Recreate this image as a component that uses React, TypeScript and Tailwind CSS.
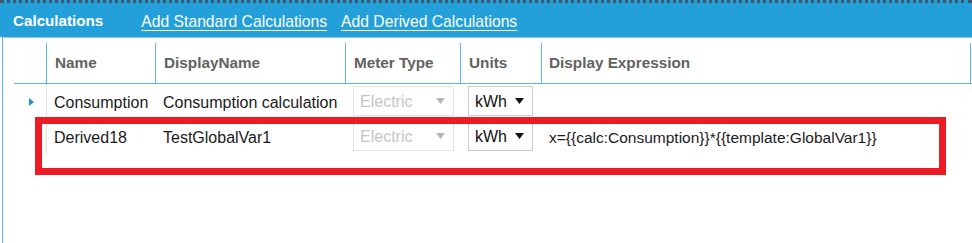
const font = { fontFamily: "'Segoe UI', 'Liberation Sans', Arial, sans-serif" };

function Caret({ muted }: { muted?: boolean }) {
  return (
    <svg width="9" height="6" viewBox="0 0 9 6" className="shrink-0">
      <path d="M0 0 H9 L4.5 6 Z" fill={muted ? "#b5b5b5" : "#111111"} />
    </svg>
  );
}

function Combo({ value, disabled, width }: { value: string; disabled?: boolean; width: string }) {
  return (
    <div
      className={`flex items-center justify-between h-[30px] pl-[6px] pr-[8px] border bg-white ${width} ${
        disabled ? "border-[#e3e3e3] text-[#c6c6c6]" : "border-[#cdcdcd] text-[#111]"
      }`}
    >
      <span className="text-[16px] leading-none pt-[2px]">{value}</span>
      <Caret muted={disabled} />
    </div>
  );
}

const cols = "grid grid-cols-[32px_109px_190px_115px_81px_430px]";

const rows = [
  { name: "Consumption", display: "Consumption calculation", expr: "", current: true },
  { name: "Derived18", display: "TestGlobalVar1", expr: "x={{calc:Consumption}}*{{template:GlobalVar1}}", current: false },
];

export default function App() {
  return (
    <div className="relative w-[972px] h-[243px] bg-white overflow-hidden flex flex-col" style={font}>
      {/* title bar */}
      <div className="h-[37px] shrink-0 bg-[#239fda] border-t-[3px] border-dotted border-[#3d5566] flex items-center pl-[13px] pt-[3px] gap-[38px] text-white">
        <span className="font-bold text-[15.2px]">Calculations</span>
        <div className="flex gap-[14px] text-[15.7px]">
          <span className="underline underline-offset-[3px]">Add Standard Calculations</span>
          <span className="underline underline-offset-[3px]">Add Derived Calculations</span>
        </div>
      </div>

      {/* body */}
      <div className="flex-1 ml-[2px] border-l border-[#5fb6e6] border-t border-t-[#8fcdef] pl-[11px] pt-[5px]">
        <div className={`${cols} h-[41px] border-b border-[#5fb6e6] text-[15.3px] font-bold text-[#626262]`}>
          <div />
          <div className="border-l border-[#5fb6e6] flex items-center pl-[8px]">Name</div>
          <div className="border-l border-[#5fb6e6] flex items-center pl-[8px]">DisplayName</div>
          <div className="border-l border-[#5fb6e6] flex items-center pl-[8px]">Meter Type</div>
          <div className="border-l border-[#5fb6e6] flex items-center pl-[8px]">Units</div>
          <div className="border-l border-r border-[#5fb6e6] flex items-center pl-[7px]">Display Expression</div>
        </div>

        {rows.map((r) => (
          <div key={r.name} className={`${cols} h-[35px] text-[16px] text-[#1b1b1b]`}>
            <div className="flex items-center justify-center pl-[2px] pt-[1px]">
              {r.current && (
                <svg width="5" height="8" viewBox="0 0 5 8">
                  <path d="M0 0 L5 4 L0 8 Z" fill="#1f8fd2" />
                </svg>
              )}
            </div>
            <div className="border-l border-[#e2e2e2] flex items-center pl-[7px] pt-[2px] whitespace-nowrap">{r.name}</div>
            <div className="flex items-center pl-[8px] pt-[2px] whitespace-nowrap">{r.display}</div>
            <div className="flex items-start pl-[8px] pt-[2px]">
              <Combo value="Electric" disabled width="w-[101px]" />
            </div>
            <div className="flex items-start pl-[8px] pt-[2px]">
              <Combo value="kWh" width="w-[65px]" />
            </div>
            <div className="flex items-center pl-[8px] pt-[2px] whitespace-nowrap text-[15.5px]">{r.expr}</div>
          </div>
        ))}
      </div>

      {/* annotation */}
      <div className="absolute left-[35px] top-[117px] w-[911px] h-[58px] border-[7px] border-[#ed1c24]" />
    </div>
  );
}
